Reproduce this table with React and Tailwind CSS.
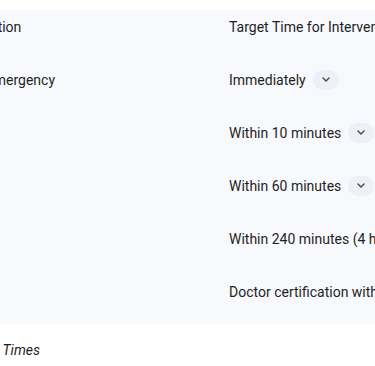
import React from 'react';

const rows = [
  { situation: 'An emergency', target: 'Immediately', pill: true },
  { situation: '', target: 'Within 10 minutes', pill: true },
  { situation: '', target: 'Within 60 minutes', pill: true },
  { situation: '', target: 'Within 240 minutes (4 hours)', pill: false },
  { situation: '', target: 'Doctor certification within 24 hours', pill: false },
];

const Chevron = () => (
  <svg width="8" height="5" viewBox="0 0 8 5" fill="none">
    <path d="M1 1l3 3 3-3" stroke="#444746" strokeWidth="1.4" strokeLinecap="round" strokeLinejoin="round" />
  </svg>
);

const App = () => {
  return (
    <div
      className="w-[375px] h-[366px] overflow-hidden bg-white text-[#1f1f1f] text-[14px] leading-6"
      style={{ fontFamily: 'Roboto, "Noto Sans", sans-serif' }}
    >
      <div className="pt-[10px]">
        <div className="bg-[#f8f9fc] pb-[6px]">
          <table className="-ml-[50px] w-[700px] table-fixed border-collapse">
            <colgroup>
              <col className="w-[263px]" />
              <col className="w-[437px]" />
            </colgroup>
            <thead>
              <tr className="h-[43px] align-top">
                <th className="px-4 pt-[5px] text-left font-normal whitespace-nowrap">Situation</th>
                <th className="px-4 pt-[5px] text-left font-normal whitespace-nowrap">
                  Target Time for Intervention
                </th>
              </tr>
            </thead>
            <tbody>
              {rows.map((row) => (
                <tr key={row.target} className="h-[53px]">
                  <td className="px-4 whitespace-nowrap">{row.situation}</td>
                  <td className="px-4 whitespace-nowrap">
                    <div className="flex items-center gap-[7px]">
                      <span>{row.target}</span>
                      {row.pill && (
                        <span className="w-[26px] h-[20px] rounded-full bg-[#edf0f6] flex items-center justify-center">
                          <Chevron />
                        </span>
                      )}
                    </div>
                  </td>
                </tr>
              ))}
            </tbody>
          </table>
        </div>
        <div className="mt-[14px] -ml-[260px] w-[300px] text-right italic whitespace-nowrap">
          Table: Triage Categories and Target Times
        </div>
      </div>
    </div>
  );
};

export default App;
